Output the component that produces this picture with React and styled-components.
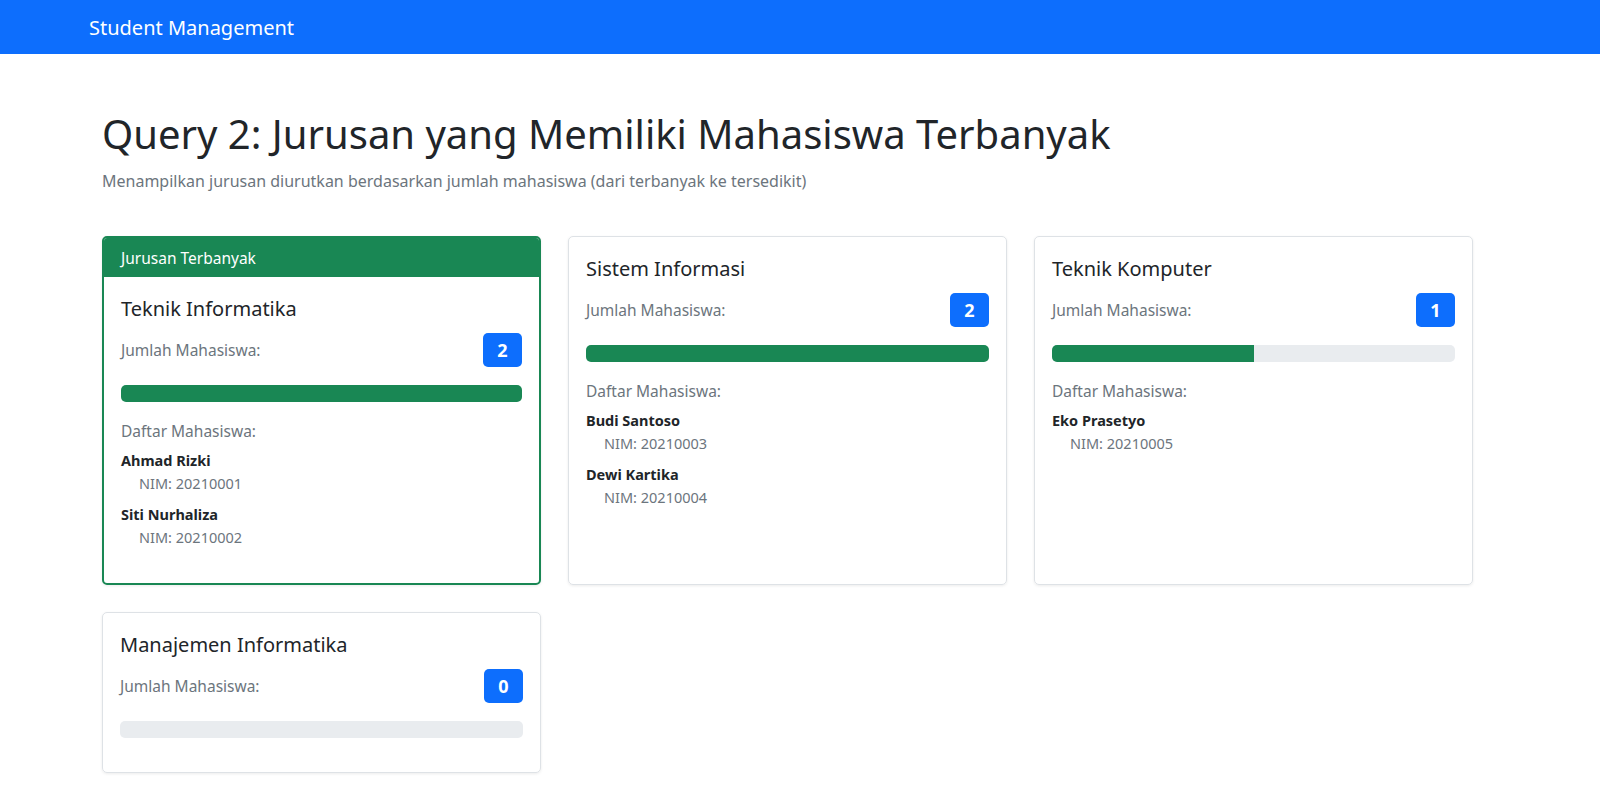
import React from "react";
import styled, { createGlobalStyle } from "styled-components";

const Global = createGlobalStyle`
  body { margin:0; font-family: "Noto Sans","Open Sans",sans-serif; color:#212529; background:#fff; }
  * { box-sizing:border-box; }
`;
const Nav = styled.div`
  height:54px; background:#0d6efd; display:flex; align-items:center; padding-left:89px;
  color:#fff; font-size:20px;
`;
const Main = styled.div` padding:0 102px 40px; `;
const H1 = styled.h1` margin:55px 0 0; font-size:40px; font-weight:400; line-height:50px; `;
const Sub = styled.p` margin:11px 0 0; color:#6c757d; font-size:16px; `;
const Grid = styled.div`
  display:grid; grid-template-columns:repeat(3,439px); column-gap:27px; row-gap:27px; margin-top:44px;
`;
const Card = styled.div`
  border:1px solid ${p=>p.$top?"#198754":"#dee2e6"}; border-width:${p=>p.$top?"2px":"1px"};
  border-radius:5px; box-shadow:0 1px 3px rgba(0,0,0,.08); overflow:hidden; display:flex; flex-direction:column;
`;
const Header = styled.div` background:#198754; color:#fff; font-size:15.5px; height:39px; display:flex; align-items:center; padding:0 17px; `;
const Body = styled.div` padding:19px 17px 34px; `;
const Title = styled.div` font-size:20px; line-height:26px; `;
const Row = styled.div` display:flex; justify-content:space-between; align-items:flex-start; margin-top:11px; `;
const Label = styled.div` color:#6c757d; font-size:15.5px; line-height:34px; margin-top:-16px; padding-top:16px;`;
const Badge = styled.div`
  background:#0d6efd; color:#fff; font-weight:700; font-size:18px; width:39px; height:34px; border-radius:5px;
  display:flex; align-items:center; justify-content:center;
`;
const Track = styled.div` height:17px; background:#e9ecef; border-radius:5px; margin-top:18px; overflow:hidden; `;
const Fill = styled.div` height:100%; background:#198754; `;
const List = styled.div` color:#6c757d; font-size:15.5px; margin-top:17px; line-height:24px; `;
const Name = styled.div` font-weight:700; font-size:14.5px; margin-top:${p=>p.$first?"6px":"8px"}; line-height:22px; color:#212529; `;
const Nim = styled.div` color:#6c757d; font-size:14.5px; padding-left:18px; line-height:24px; `;

const data = [
  { t:"Teknik Informatika", n:2, top:true, s:[["Ahmad Rizki","20210001"],["Siti Nurhaliza","20210002"]] },
  { t:"Sistem Informasi", n:2, s:[["Budi Santoso","20210003"],["Dewi Kartika","20210004"]] },
  { t:"Teknik Komputer", n:1, s:[["Eko Prasetyo","20210005"]] },
  { t:"Manajemen Informatika", n:0, s:[] },
];

export default function App() {
  return (
    <>
      <Global />
      <Nav>Student Management</Nav>
      <Main>
        <H1>Query 2: Jurusan yang Memiliki Mahasiswa Terbanyak</H1>
        <Sub>Menampilkan jurusan diurutkan berdasarkan jumlah mahasiswa (dari terbanyak ke tersedikit)</Sub>
        <Grid>
          {data.map(d => (
            <Card key={d.t} $top={d.top}>
              {d.top && <Header>Jurusan Terbanyak</Header>}
              <Body>
                <Title>{d.t}</Title>
                <Row><Label>Jumlah Mahasiswa:</Label><Badge>{d.n}</Badge></Row>
                <Track><Fill style={{ width: `${d.n / 2 * 100}%` }} /></Track>
                {d.s.length > 0 && (
                  <List>
                    Daftar Mahasiswa:
                    {d.s.map(([a, b], i) => (
                      <div key={b}><Name $first={i===0}>{a}</Name><Nim>NIM: {b}</Nim></div>
                    ))}
                  </List>
                )}
              </Body>
            </Card>
          ))}
        </Grid>
      </Main>
    </>
  );
}
